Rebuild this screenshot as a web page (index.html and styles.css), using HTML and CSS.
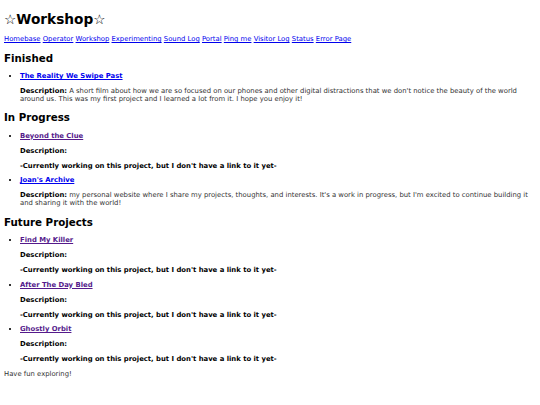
FILE: index.html
```html
<!DOCTYPE html>
<html lang="en">
<head>
  <meta charset="UTF-8">
  <meta name="viewport" content="width=device-width, initial-scale=1.0">
  <title>Workshop</title>
  <link rel="stylesheet" href="styles.css">
</head>
<body>

<h1>☆Workshop☆</h1>

<p class="nav">
  <a href="#">Homebase</a>
  <a href="#">Operator</a>
  <a href="#">Workshop</a>
  <a href="#">Experimenting</a>
  <a href="#">Sound Log</a>
  <a href="#">Portal</a>
  <a href="#">Ping me</a>
  <a href="#">Visitor Log</a>
  <a href="#">Status</a>
  <a href="#">Error Page</a>
</p>

<h2>Finished</h2>
<ul class="projects">
  <li>
    <a href="#" class="title">The Reality We Swipe Past</a>
    <p class="desc"><b>Description:</b> A short film about how we are so focused on our phones and other digital distractions that we don't notice the beauty of the world around us. This was my first project and I learned a lot from it. I hope you enjoy it!</p>
  </li>
</ul>

<h2>In Progress</h2>
<ul class="projects">
  <li>
    <a href="#" class="title visited">Beyond the Clue</a>
    <p class="desc"><b>Description:</b></p>
    <p class="wip">-Currently working on this project, but I don't have a link to it yet-</p>
  </li>
  <li>
    <a href="#" class="title">Joan's Archive</a>
    <p class="desc"><b>Description:</b> my personal website where I share my projects, thoughts, and interests. It's a work in progress, but I'm excited to continue building it and sharing it with the world!</p>
  </li>
</ul>

<h2>Future Projects</h2>
<ul class="projects">
  <li>
    <a href="#" class="title visited">Find My Killer</a>
    <p class="desc"><b>Description:</b></p>
    <p class="wip">-Currently working on this project, but I don't have a link to it yet-</p>
  </li>
  <li>
    <a href="#" class="title visited">After The Day Bled</a>
    <p class="desc"><b>Description:</b></p>
    <p class="wip">-Currently working on this project, but I don't have a link to it yet-</p>
  </li>
  <li>
    <a href="#" class="title visited">Ghostly Orbit</a>
    <p class="desc"><b>Description:</b></p>
    <p class="wip">-Currently working on this project, but I don't have a link to it yet-</p>
  </li>
</ul>

<p class="outro">Have fun exploring!</p>

</body>
</html>
```

FILE: styles.css
```css
body {
  margin: 4px;
  font-family: "DejaVu Sans", Verdana, sans-serif;
  font-size: 6.85px;
  color: #333333;
  background-color: #ffffff;
}
h1 {
  font-size: 2em;
  color: #000000;
  margin: 7px 0 8px;
}
h2 {
  font-size: 1.5em;
  color: #000000;
  margin: 0.83em 0;
}
p {
  margin: 1em 0;
}
a {
  color: #0000ee;
}
a.visited {
  color: #551a8b;
}
.projects {
  list-style: square;
  padding-left: 16px;
  margin: 1em 0;
}
.title {
  font-weight: bold;
}
.desc b {
  color: #000000;
}
.wip {
  font-weight: bold;
  color: #000000;
}
```
